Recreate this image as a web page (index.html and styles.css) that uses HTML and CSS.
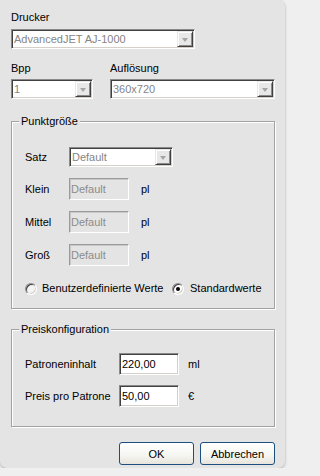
FILE: index.html
```html
<!DOCTYPE html>
<html lang="de">
<head>
<meta charset="utf-8">
<title>Drucker</title>
<link rel="stylesheet" href="styles.css">
</head>
<body>
<div class="dialog">
  <div class="lbl lbl-top">Drucker</div>
  <div class="combo combo-printer"><span class="val">AdvancedJET AJ-1000</span><span class="arrow"><i></i></span></div>

  <div class="row2">
    <div class="col">
      <div class="lbl lbl-mid">Bpp</div>
      <div class="combo"><span class="val">1</span><span class="arrow"><i></i></span></div>
    </div>
    <div class="col">
      <div class="lbl lbl-mid">Auflösung</div>
      <div class="combo"><span class="val">360x720</span><span class="arrow"><i></i></span></div>
    </div>
  </div>

  <fieldset class="group group-dots">
    <legend>Punktgröße</legend>
    <div class="gbody gbody-dots">
      <div class="frow"><span class="flbl">Satz</span><div class="combo combo-satz"><span class="val">Default</span><span class="arrow"><i></i></span></div></div>
      <div class="frow"><span class="flbl">Klein</span><span class="tin dis">Default</span><span class="unit">pl</span></div>
      <div class="frow"><span class="flbl">Mittel</span><span class="tin dis">Default</span><span class="unit">pl</span></div>
      <div class="frow"><span class="flbl">Groß</span><span class="tin dis">Default</span><span class="unit">pl</span></div>
      <div class="radios">
        <span class="ropt ropt-first"><span class="radio"></span>Benutzerdefinierte Werte</span>
        <span class="ropt"><span class="radio on"></span>Standardwerte</span>
      </div>
    </div>
  </fieldset>

  <fieldset class="group group-price">
    <legend>Preiskonfiguration</legend>
    <div class="gbody gbody-price">
      <div class="frow"><span class="flbl wide">Patroneninhalt</span><span class="tin">220,00</span><span class="unit unit-price">ml</span></div>
      <div class="frow"><span class="flbl wide">Preis pro Patrone</span><span class="tin">50,00</span><span class="unit unit-price">€</span></div>
    </div>
  </fieldset>

  <div class="buttons">
    <button class="btn" type="button">OK</button>
    <button class="btn" type="button">Abbrechen</button>
  </div>
</div>
</body>
</html>
```

FILE: styles.css
```css
html, body {
  margin: 0;
  padding: 0;
}
body {
  background: #efefef;
  font-family: "Liberation Sans", Arial, sans-serif;
  font-size: 11px;
  line-height: 13px;
  color: #000;
}
.dialog {
  box-sizing: border-box;
  width: 285px;
  height: 468px;
  padding: 11px 10px 0 11px;
  background: #e4e4e4;
  border-radius: 0 7px 7px 7px;
  box-shadow: 0 1px 3px rgba(0, 0, 0, 0.28);
}
.lbl {
  height: 13px;
}
.lbl-top { margin-bottom: 5px; }
.lbl-mid { margin-bottom: 4px; }

/* combo box */
.combo {
  box-sizing: border-box;
  height: 20px;
  display: flex;
  align-items: stretch;
  background: #fff;
  border: 1px solid;
  border-color: #8a8a8a #fff #fff #8a8a8a;
  box-shadow: inset 1px 1px 0 #404040, inset -1px -1px 0 #d4d0c8;
  padding: 1px;
}
.combo .val {
  flex: 1;
  padding-left: 1px;
  color: #858585;
  display: flex;
  align-items: center;
  white-space: nowrap;
  overflow: hidden;
}
.combo .arrow {
  box-sizing: border-box;
  width: 16px;
  background: #e8e8e8;
  border: 1px solid;
  border-color: #e8e8e8 #404040 #404040 #e8e8e8;
  box-shadow: inset 1px 1px 0 #fff, inset -1px -1px 0 #8a8a8a;
  display: flex;
  align-items: center;
  justify-content: center;
}
.combo .arrow i {
  display: block;
  width: 0;
  height: 0;
  border-left: 3.5px solid transparent;
  border-right: 3.5px solid transparent;
  border-top: 4px solid #a6a6a6;
  margin-top: 1px;
}
.combo-printer { width: 184px; }
.combo-satz { width: 104px; }

.row2 {
  margin-top: 13px;
  display: grid;
  grid-template-columns: 82px 1fr;
  column-gap: 17px;
}

/* group boxes */
.group {
  margin: 0;
  padding: 0;
  min-width: 0;
  border: 1px solid #a2a2a2;
  box-shadow: inset 1px 1px 0 #fff, 1px 1px 0 #fff;
}
.group legend {
  margin-left: 7px;
  padding: 0 2px;
  line-height: 13px;
  background: #e4e4e4;
}
.group-dots { margin-top: 16px; }
.group-price { margin-top: 14px; }
.gbody {
  padding-left: 13px;
  display: flex;
  flex-direction: column;
}
.gbody-dots {
  padding-top: 19px;
  padding-bottom: 13px;
  gap: 11px;
}
.gbody-price {
  padding-top: 17px;
  padding-bottom: 19px;
  gap: 10px;
}
.frow {
  display: flex;
  align-items: center;
}
.flbl {
  width: 44px;
  flex: none;
}
.flbl.wide { width: 94px; }

/* text inputs */
.tin {
  box-sizing: border-box;
  width: 60px;
  height: 22px;
  display: flex;
  align-items: center;
  padding: 0 2px;
  background: #fff;
  border: 1px solid;
  border-color: #8a8a8a #fff #fff #8a8a8a;
  box-shadow: inset 1px 1px 0 #404040, inset -1px -1px 0 #d4d0c8;
  color: #000;
}
.tin.dis {
  padding-left: 1px;
  background: #e4e4e4;
  border-color: #9a9a9a #fff #fff #9a9a9a;
  box-shadow: inset 1px 1px 0 #c8c8c8;
  color: #8c8c8c;
}
.unit { margin-left: 12px; }
.unit.unit-price { margin-left: 9px; }

/* radios */
.radios {
  margin-top: 5px;
  display: flex;
  align-items: center;
  height: 13px;
}
.ropt {
  display: flex;
  align-items: center;
  white-space: nowrap;
}
.ropt-first { width: 147px; }
.radio {
  box-sizing: border-box;
  width: 12px;
  height: 12px;
  margin-right: 5px;
  border-radius: 50%;
  border: 1px solid;
  border-color: #8a8a8a #fff #fff #8a8a8a;
  box-shadow: inset 1px 1px 0 #404040, inset -1px -1px 0 #d4d0c8;
  background: #fff;
  display: flex;
  align-items: center;
  justify-content: center;
  flex: none;
}
.ropt-first .radio { background: #f4f4f4; }
.radio.on { margin-right: 6px; }
.radio.on::after {
  content: "";
  width: 4px;
  height: 4px;
  border-radius: 50%;
  background: #000;
}

/* buttons */
.buttons {
  margin-top: 15px;
  display: flex;
  justify-content: flex-end;
  gap: 6px;
}
.btn {
  box-sizing: border-box;
  width: 75px;
  height: 23px;
  margin: 0;
  padding: 0;
  border: 1px solid #1c4f80;
  border-radius: 3px;
  background: linear-gradient(#ffffff, #f5f5f1 60%, #e6e4dc);
  font-family: "Liberation Sans", Arial, sans-serif;
  font-size: 11px;
  color: #000;
}
```
